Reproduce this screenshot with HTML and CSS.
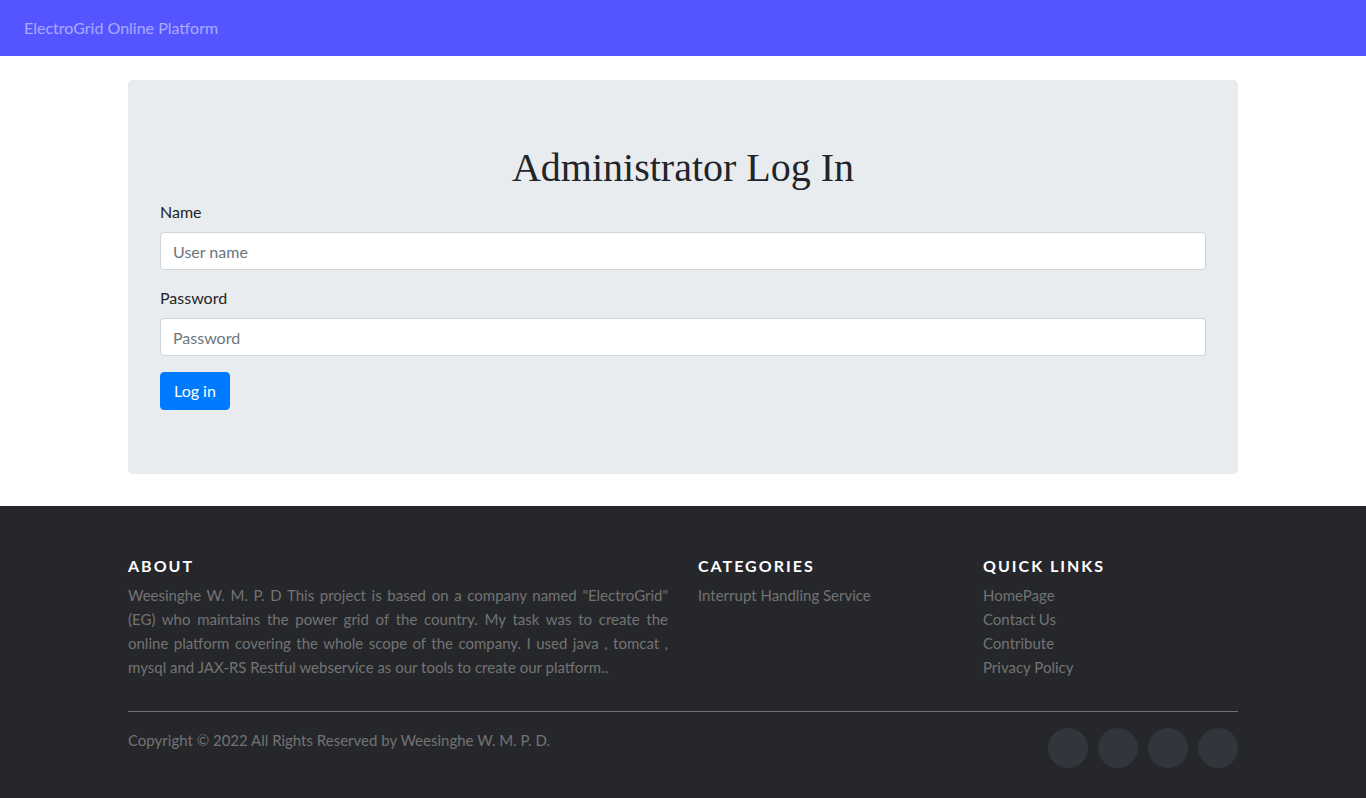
FILE: index.html
```html
<!DOCTYPE html>
<html lang="en">
<head>
<meta charset="utf-8">
<title>Administrator Log In</title>
<link rel="stylesheet" href="styles.css">
</head>
<body>
<nav class="navbar">
  <a class="brand" href="#">ElectroGrid Online Platform</a>
</nav>

<main class="container">
  <section class="jumbotron">
    <h1 class="title">Administrator Log In</h1>
    <form class="login-form">
      <div class="form-group">
        <label for="uname">Name</label>
        <input id="uname" class="form-control" type="text" placeholder="User name">
      </div>
      <div class="form-group">
        <label for="pwd">Password</label>
        <input id="pwd" class="form-control" type="password" placeholder="Password">
      </div>
      <button type="button" class="btn">Log in</button>
    </form>
  </section>
</main>

<footer class="site-footer">
  <div class="container">
    <div class="footer-row">
      <div class="col-about">
        <h6>About</h6>
        <p class="about-text">Weesinghe W. M. P. D This project is based on a company named "ElectroGrid" (EG) who maintains the power grid of the country. My task was to create the online platform covering the whole scope of the company. I used java , tomcat , mysql and JAX-RS Restful webservice as our tools to create our platform..</p>
      </div>
      <div class="col-links">
        <h6>Categories</h6>
        <ul class="footer-links">
          <li><a href="#">Interrupt Handling Service</a></li>
        </ul>
      </div>
      <div class="col-links">
        <h6>Quick Links</h6>
        <ul class="footer-links">
          <li><a href="#">HomePage</a></li>
          <li><a href="#">Contact Us</a></li>
          <li><a href="#">Contribute</a></li>
          <li><a href="#">Privacy Policy</a></li>
        </ul>
      </div>
    </div>
    <hr class="divider">
    <div class="bottom-row">
      <p class="copyright">Copyright &copy; 2022 All Rights Reserved by Weesinghe W. M. P. D.</p>
      <ul class="social-icons">
        <li><a href="#" aria-label="facebook"></a></li>
        <li><a href="#" aria-label="twitter"></a></li>
        <li><a href="#" aria-label="dribbble"></a></li>
        <li><a href="#" aria-label="linkedin"></a></li>
      </ul>
    </div>
  </div>
</footer>
</body>
</html>
```
FILE: styles.css
```css
* { box-sizing: border-box; }

html, body { margin: 0; padding: 0; }

body {
  font-family: Lato, "Open Sans", "Noto Sans", sans-serif;
  font-size: 16px;
  line-height: 1.5;
  color: #212529;
  background: #fff;
}

.navbar {
  height: 56px;
  background: #5555ff;
  display: flex;
  align-items: center;
  padding: 0 24px;
}

.brand {
  color: rgba(255, 255, 255, 0.5);
  font-size: 16px;
  text-decoration: none;
}

.container {
  width: 1140px;
  margin: 0 auto;
  padding: 0 15px;
}

main.container { padding-top: 24px; }

.jumbotron {
  background: #e9ecef;
  border-radius: 4.8px;
  padding: 64px 32px;
  margin-bottom: 32px;
}

.title {
  font-family: "Liberation Serif", "Times New Roman", serif;
  font-weight: 400;
  font-size: 40px;
  line-height: 48px;
  text-align: center;
  margin: 0 0 8px;
}

.form-group { margin-bottom: 16px; }

label {
  display: block;
  margin-bottom: 8px;
  line-height: 24px;
}

.form-control {
  display: block;
  width: 100%;
  height: 38px;
  padding: 6px 12px;
  font-family: inherit;
  font-size: 16px;
  color: #495057;
  background: #fff;
  border: 1px solid #ced4da;
  border-radius: 4px;
}

.form-control::placeholder { color: #6c757d; }

.btn {
  display: inline-block;
  height: 38px;
  padding: 6px 13px;
  font-family: inherit;
  font-size: 16px;
  line-height: 24px;
  color: #fff;
  background: #007bff;
  border: 1px solid #007bff;
  border-radius: 4px;
  cursor: pointer;
}

.site-footer {
  background: #26272b;
  padding: 45px 0 30px;
  font-size: 15px;
  line-height: 24px;
  color: #737373;
}

.footer-row {
  display: grid;
  grid-template-columns: 570px 285px 285px;
  margin: 0 -15px;
}

.footer-row > div { padding: 0 15px; }

.site-footer h6 {
  color: #fff;
  font-size: 16px;
  line-height: 19px;
  font-weight: 700;
  text-transform: uppercase;
  letter-spacing: 2px;
  margin: 5px 0 8px;
}

.about-text {
  text-align: justify;
  margin: 0 0 16px;
}

.footer-links {
  list-style: none;
  margin: 0;
  padding: 0;
}

.footer-links a {
  color: #737373;
  text-decoration: none;
}

.divider {
  border: 0;
  border-top: 1px solid #bbb;
  opacity: 0.5;
  margin: 16px 0;
}

.bottom-row {
  display: flex;
  justify-content: space-between;
  align-items: flex-start;
}

.copyright { margin: 0; }

.social-icons {
  list-style: none;
  display: flex;
  gap: 10px;
  margin: 0;
  padding: 0;
}

.social-icons a {
  display: block;
  width: 40px;
  height: 40px;
  border-radius: 50%;
  background: #33353d;
}
```
